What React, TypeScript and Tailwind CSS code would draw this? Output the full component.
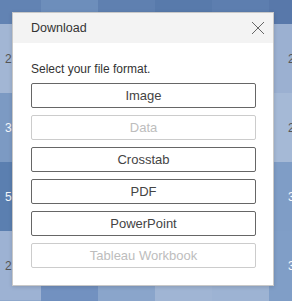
import React from "react";

const cols = ["41px", "57px", "57px", "57px", "57px", "57px"];
type Cell = { bg: string; t?: string; light?: boolean };
const rows: { h: string; cells: Cell[] }[] = [
  {
    h: "h-[24px]",
    cells: [
      { bg: "bg-[#6283b3]" },
      { bg: "bg-[#6d8ebb]" },
      { bg: "bg-[#5f80b0]" },
      { bg: "bg-[#587aab]" },
      { bg: "bg-[#5d7eaf]" },
      { bg: "bg-[#5878aa]" },
    ],
  },
  {
    h: "h-[69px]",
    cells: [
      { bg: "bg-[#a2b6d4]", t: "2,1", light: true },
      { bg: "bg-[#8aa5ca]" },
      { bg: "bg-[#7e9bc4]" },
      { bg: "bg-[#95add0]" },
      { bg: "bg-[#7b99c3]" },
      { bg: "bg-[#9bb0d1]", t: "2", light: true },
    ],
  },
  {
    h: "h-[69px]",
    cells: [
      { bg: "bg-[#7c9ac3]", t: "3,4" },
      { bg: "bg-[#9ab0d1]" },
      { bg: "bg-[#6e8ebd]" },
      { bg: "bg-[#8ca7cb]" },
      { bg: "bg-[#a0b5d4]" },
      { bg: "bg-[#a5b9d6]", t: "2", light: true },
    ],
  },
  {
    h: "h-[69px]",
    cells: [
      { bg: "bg-[#5b7fb0]", t: "5,1" },
      { bg: "bg-[#7c9ac3]" },
      { bg: "bg-[#8ea8cc]" },
      { bg: "bg-[#6a8bba]" },
      { bg: "bg-[#9ab0d1]" },
      { bg: "bg-[#7f9dc6]", t: "3" },
    ],
  },
  {
    h: "h-[69px]",
    cells: [
      { bg: "bg-[#9db2d3]", t: "2,3", light: true },
      { bg: "bg-[#7291c0]" },
      { bg: "bg-[#8aa5cb]" },
      { bg: "bg-[#a0b5d4]" },
      { bg: "bg-[#9db3d3]" },
      { bg: "bg-[#809ec7]", t: "3" },
    ],
  },
  {
    h: "h-[69px]",
    cells: [
      { bg: "bg-[#8fa8cc]" },
      { bg: "bg-[#6f8fbe]" },
      { bg: "bg-[#8aa5cb]" },
      { bg: "bg-[#a0b5d4]" },
      { bg: "bg-[#9db3d3]" },
      { bg: "bg-[#7f9dc6]" },
    ],
  },
];

const buttons: { label: string; disabled?: boolean }[] = [
  { label: "Image" },
  { label: "Data", disabled: true },
  { label: "Crosstab" },
  { label: "PDF" },
  { label: "PowerPoint" },
  { label: "Tableau Workbook", disabled: true },
];

export default function App() {
  return (
    <div
      className="relative w-[292px] h-[301px] overflow-hidden bg-[#7f9dc6]"
      style={{ fontFamily: '"Liberation Sans", Arial, sans-serif' }}
    >
      <div className="flex flex-col">
        {rows.map((r, ri) => (
          <div key={ri} className={`flex ${r.h} shrink-0`}>
            {r.cells.map((c, ci) => (
              <div
                key={ci}
                className={`${c.bg} shrink-0 h-full flex items-center text-[12px] ${
                  c.light ? "text-[#555555]" : "text-[#f4f6fa]"
                } ${ci === 0 ? "pl-[5px]" : ci === 5 ? "pl-[19px]" : ""}`}
                style={{ width: cols[ci] }}
              >
                {c.t}
              </div>
            ))}
          </div>
        ))}
      </div>

      <div className="absolute left-[12px] top-[12px] w-[262px] h-[274px] bg-white border border-[#c8c8c8] shadow-[0_1px_4px_rgba(0,0,0,0.15)] flex flex-col">
        <div className="h-[30px] bg-[#f3f3f3] flex items-center justify-between pl-[18px] pr-[8px] shrink-0">
          <span className="text-[12.5px] text-[#333333] leading-none">Download</span>
          <svg width="14" height="14" viewBox="0 0 14 14" className="block">
            <path d="M1 1 L13 13 M13 1 L1 13" stroke="#666666" strokeWidth="1" fill="none" />
          </svg>
        </div>
        <div className="pl-[18px] pr-[17px] pt-[18px] flex flex-col">
          <div className="text-[12px] leading-[16px] text-[#333333] mb-[6px]">
            Select your file format.
          </div>
          <div className="flex flex-col gap-[7px]">
            {buttons.map((b) => (
              <div
                key={b.label}
                className={`h-[25px] rounded-[2px] border flex items-center justify-center text-[13px] ${
                  b.disabled
                    ? "border-[#cccccc] text-[#bdbdbd]"
                    : "border-[#666666] text-[#444444]"
                }`}
              >
                {b.label}
              </div>
            ))}
          </div>
        </div>
      </div>
    </div>
  );
}
